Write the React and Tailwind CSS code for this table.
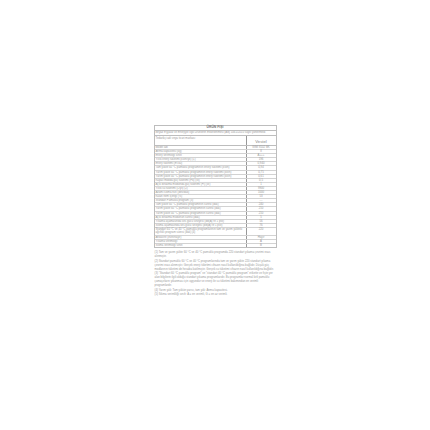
const rows = [
  ["Model adı", "WMI 8102 BK"],
  ["Anma kapasitesi (kg)", "8"],
  ["Enerji verimliliği sınıfı", "A+++"],
  ["Yıllık enerji tüketimi (kWh/yıl) (1)", "196"],
  ["Enerji tüketimi (Et.60)", "0,940"],
  ["Tam yükte 60 °C pamuklu programının enerji tüketimi (kWh)", "0,94"],
  ["Yarım yükte 60 °C pamuklu programının enerji tüketimi (kWh)", "0,75"],
  ["Yarım yükte 40 °C pamuklu programının enerji tüketimi (kWh)", "0,61"],
  ["Kapalı modda güç tüketimi (Po) (W)", "0,5"],
  ["Açık bırakma modunda güç tüketimi (Pl) (W)", "1"],
  ["Yıllık su tüketimi (L/yıl) (2)", "9900"],
  ["Azami sıkma hızı (dev/dak)", "1000"],
  ["Kalan nem içeriği (%)", "53"],
  ["Standart Pamuklu program (3)", "---"],
  ["Tam yükte 60 °C pamuklu programının süresi (dak)", "240"],
  ["Yarım yükte 60 °C pamuklu programının süresi (dak)", "210"],
  ["Yarım yükte 40 °C pamuklu programının süresi (dak)", "210"],
  ["Açık bırakma modunun süresi (dak)", "5"],
  ["Yıkama aşamasında ses gücü seviyesi (dB(A) re 1 pW)", "56"],
  ["Sıkma aşamasında ses gücü seviyesi (dB(A) re 1 pW)", "76"],
  ["Standart 60 °C ve 40 °C pamuklu programlarının tam ve yarım yükteki ağırlıklı program süresi (dak) (4)", "220", true],
  ["Ankastre (evet/hayır)", "Hayır"],
  ["Yıkama verimliliği", "A"],
  ["Sıkma verimliliği sınıfı", "B"],
];

const notes = [
  "(1) Tam ve yarım yükte 60 °C ve 40 °C pamuklu programda 220 standart yıkama çevrimi esas alınmıştır.",
  "(2) Standart pamuklu 60 °C ve 40 °C programlarında tam ve yarım yükte 220 standart yıkama çevrimi esas alınmıştır. Gerçek enerji tüketimi cihazın nasıl kullanıldığına bağlıdır. Düşük güç modlarının tüketimi de hesaba katılmıştır. Gerçek su tüketimi cihazın nasıl kullanıldığına bağlıdır.",
  "(3) \"Standart 60 °C pamuklu program\" ve \"standart 40 °C pamuklu program\" etikette ve fişte yer alan bilgilerin ilgili olduğu standart yıkama programlarıdır. Bu programlar normal kirli pamuklu çamaşırların yıkanması için uygundur ve enerji ile su tüketimi bakımından en verimli programlardır.",
  "(4) Yarım yük: Tam yükün yarısı, tam yük: Anma kapasitesi.",
  "(5) Sıkma verimliliği sınıfı: A = en verimli, G = en az verimli.",
];

export default function App() {
  return (
    <div className="w-[430px] h-[430px] bg-white pt-[125px] font-['Liberation_Sans',Arial,sans-serif] text-[#9a9a9a]">
      <div className="w-[123px] mx-auto">
        <div className="border border-[#bdbdbd] text-[2.8px] leading-[3.1px]">
          <div className="h-[5px] flex items-center justify-center font-bold text-[3.4px] text-[#777] border-b border-[#bdbdbd]">
            ÜRÜN FİŞİ
          </div>
          <div className="h-[4.5px] flex items-center px-[1px] border-b border-[#bdbdbd] whitespace-nowrap overflow-hidden">
            Beyaz Eşyalar ile Enerjiyle İlgili Ürünlerin Etiketlenmesi (AB) 1061/2010 sayılı yönetmelik
          </div>
          <div className="grid grid-cols-[92px_1fr] border-b border-[#bdbdbd]">
            <div className="h-[9.5px] px-[1px] pt-[1px] border-r border-[#999]">Tedarikçi adı veya ticari markası</div>
            <div className="flex items-end justify-center pb-[1px] text-[4.2px] leading-[4.5px] text-[#888]">Vestel</div>
          </div>
          {rows.map(([label, value, tall], i) => (
            <div
              key={i}
              className={`grid grid-cols-[92px_1fr] ${i < rows.length - 1 ? "border-b border-[#d2d2d2]" : ""}`}
            >
              <div className={`px-[1px] border-r border-[#999] ${tall ? "h-[7.2px]" : "h-[3.1px] whitespace-nowrap overflow-hidden"}`}>
                {label}
              </div>
              <div className="flex items-start justify-center">{value}</div>
            </div>
          ))}
        </div>
        <div className="mt-[3px] flex flex-col gap-[1px] text-[2.8px] leading-[3.8px] px-[1px]">
          {notes.map((n, i) => (
            <p key={i}>{n}</p>
          ))}
        </div>
      </div>
    </div>
  );
}
